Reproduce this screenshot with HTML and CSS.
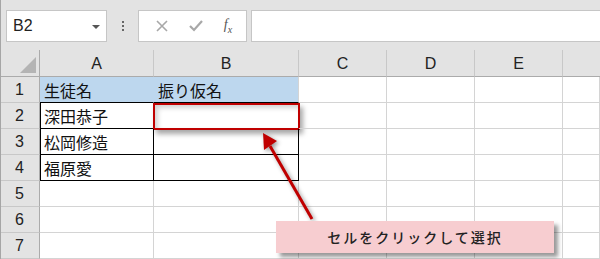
FILE: index.html
```html
<!DOCTYPE html>
<html lang="ja">
<head>
    <meta charset="UTF-8">
    <title>セルの選択</title>
    <link rel="stylesheet" href="styles.css">
</head>
<body>
    <div class="app">
        <div class="toolbar">
            <div class="namebox">
                <span>B2</span>
                <span class="caret"></span>
            </div>
            <div class="grip"><i></i><i></i><i></i></div>
            <div class="fxbox">
                <svg class="ico" width="14" height="14" viewBox="0 0 14 14"><path d="M2 2 L12 12 M12 2 L2 12" stroke="#a8a8a8" stroke-width="1.6" fill="none"/></svg>
                <svg class="ico" width="16" height="14" viewBox="0 0 16 14"><path d="M2 7 L6 11 L14 2" stroke="#a8a8a8" stroke-width="2.2" fill="none"/></svg>
                <span class="fx"><i>f</i><sub>x</sub></span>
            </div>
            <div class="formula"></div>
        </div>

        <div class="sheet">
            <div class="corner"><div class="tri"></div></div>
            <div class="colhead">A</div>
            <div class="colhead">B</div>
            <div class="colhead">C</div>
            <div class="colhead">D</div>
            <div class="colhead">E</div>
            <div class="colhead last"></div>

            <div class="rowhead">1</div>
            <div class="cell title">生徒名</div>
            <div class="cell title">振り仮名</div>
            <div class="cell"></div><div class="cell"></div><div class="cell"></div><div class="cell"></div>

            <div class="rowhead">2</div>
            <div class="cell tb first">深田恭子</div>
            <div class="cell tb selected"><div class="sel"></div></div>
            <div class="cell"></div><div class="cell"></div><div class="cell"></div><div class="cell"></div>

            <div class="rowhead">3</div>
            <div class="cell tb first">松岡修造</div>
            <div class="cell tb"></div>
            <div class="cell"></div><div class="cell"></div><div class="cell"></div><div class="cell"></div>

            <div class="rowhead">4</div>
            <div class="cell tb first">福原愛</div>
            <div class="cell tb"></div>
            <div class="cell"></div><div class="cell"></div><div class="cell"></div><div class="cell"></div>

            <div class="rowhead">5</div>
            <div class="cell"></div><div class="cell"></div><div class="cell"></div><div class="cell"></div><div class="cell"></div><div class="cell"></div>

            <div class="rowhead">6</div>
            <div class="cell"></div><div class="cell"></div><div class="cell"></div><div class="cell"></div><div class="cell"></div><div class="cell"></div>

            <div class="rowhead">7</div>
            <div class="cell"></div><div class="cell"></div><div class="cell"></div><div class="cell"></div><div class="cell"></div><div class="cell"></div>
        </div>

        <svg class="arrow" width="600" height="259" viewBox="0 0 600 259">
            <line x1="312" y1="219" x2="270" y2="146" stroke="#c00000" stroke-width="3"/>
            <polygon points="263,133 277,141 264,150" fill="#c00000"/>
        </svg>

        <div class="callout">セルをクリックして選択</div>
    </div>
</body>
</html>
```

FILE: styles.css
```css
body {
    margin: 0;
    font-family: "Liberation Sans", Arial, sans-serif;
    color: #222;
}
.app {
    position: relative;
    width: 600px;
    height: 259px;
    overflow: hidden;
    background-color: #fff;
}
.app::after {
    content: "";
    position: absolute;
    left: 0;
    top: 0;
    bottom: 0;
    width: 1px;
    background-color: #a6a6a6;
}
.toolbar {
    display: flex;
    align-items: center;
    height: 50px;
    padding: 10px 0 8px 6px;
    box-sizing: border-box;
    background-color: #e3e3e3;
}
.namebox {
    display: flex;
    align-items: center;
    justify-content: space-between;
    width: 101px;
    height: 32px;
    box-sizing: border-box;
    padding: 0 6px 0 6px;
    background-color: #fff;
    border: 1px solid #c6c6c6;
    font-size: 16px;
}
.caret {
    width: 0;
    height: 0;
    border-left: 4px solid transparent;
    border-right: 4px solid transparent;
    border-top: 4px solid #555;
    margin-top: 1px;
}
.grip {
    display: flex;
    flex-direction: column;
    align-items: center;
    gap: 2px;
    width: 31px;
}
.grip i {
    width: 2px;
    height: 2px;
    background-color: #666;
}
.fxbox {
    display: flex;
    align-items: center;
    justify-content: space-around;
    width: 109px;
    height: 32px;
    box-sizing: border-box;
    padding: 0 4px 0 6px;
    background-color: #fff;
    border: 1px solid #c6c6c6;
}
.fx {
    font-family: "Liberation Serif", serif;
    font-size: 14px;
    color: #555;
}
.fx sub {
    font-size: 10px;
    font-style: italic;
}
.formula {
    flex: 1;
    height: 32px;
    margin-left: 4px;
    box-sizing: border-box;
    background-color: #fff;
    border: 1px solid #c6c6c6;
    border-right: none;
}
.sheet {
    display: grid;
    grid-template-columns: 40px 114px 145px 88px 88px 88px 1fr;
    grid-template-rows: 27px;
    grid-auto-rows: 26px;
}
.corner,
.colhead,
.rowhead {
    background-color: #e3e3e3;
    box-sizing: border-box;
    font-size: 16px;
}
.corner {
    display: flex;
    justify-content: flex-end;
    align-items: flex-end;
    padding: 0 3px 3px 0;
    border-right: 1px solid #ababab;
    border-bottom: 1px solid #ababab;
}
.tri {
    width: 16px;
    height: 16px;
    background-color: #b4b4b4;
    clip-path: polygon(100% 0, 100% 100%, 0 100%);
}
.colhead {
    display: flex;
    align-items: center;
    justify-content: center;
    padding-top: 2px;
    border-bottom: 1px solid #ababab;
    border-right: 1px solid #c8c8c8;
}
.colhead.last {
    border-right: none;
}
.rowhead {
    display: flex;
    align-items: center;
    justify-content: center;
    border-right: 1px solid #ababab;
    border-bottom: 1px solid #c8c8c8;
}
.cell {
    position: relative;
    display: flex;
    align-items: center;
    padding-left: 4px;
    box-sizing: border-box;
    border-right: 1px solid #d4d4d4;
    border-bottom: 1px solid #d4d4d4;
    font-family: "Noto Sans CJK JP", sans-serif;
    font-size: 16px;
    color: #111;
}
.cell.title {
    background-color: #bdd7ee;
    border-right-color: #bdd7ee;
    border-bottom-color: #000;
}
.cell.title + .cell.title {
    border-right-color: #d4d4d4;
}
.cell.tb {
    border-right-color: #000;
    border-bottom-color: #000;
}
.cell.first {
    box-shadow: inset 1px 0 0 #000;
}
.sel {
    position: absolute;
    left: -1px;
    top: 0;
    right: -2px;
    bottom: -2px;
    border: 2px solid #c00000;
    box-shadow: 3px 4px 5px rgba(0, 0, 0, 0.35), inset 3px 3px 5px rgba(0, 0, 0, 0.18);
}
.arrow {
    position: absolute;
    left: 0;
    top: 0;
    pointer-events: none;
    filter: drop-shadow(2px 2px 2px rgba(0, 0, 0, 0.4));
}
.callout {
    position: absolute;
    left: 276px;
    top: 221px;
    width: 278px;
    height: 32px;
    display: flex;
    align-items: center;
    justify-content: center;
    background-color: #f7cdd0;
    box-shadow: 4px 4px 4px rgba(0, 0, 0, 0.4);
    font-family: "Noto Sans CJK JP", sans-serif;
    font-size: 14px;
    font-weight: 500;
    letter-spacing: 2px;
    color: #222;
}
```
